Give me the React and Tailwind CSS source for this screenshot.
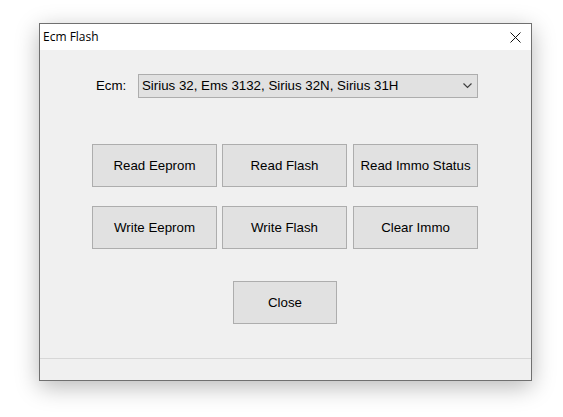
export default function App() {
    const btn =
        'flex h-[43px] w-[125px] items-center justify-center border border-[#adadad] bg-[#e1e1e1] text-[13.3px] text-black';

    return (
        <div className="h-[417px] w-[563px] bg-white pl-[39px] pt-[23px]" style={{ fontFamily: '"Liberation Sans", Arial, sans-serif' }}>
            <div className="flex h-[358px] w-[493px] flex-col border border-[#707070] bg-[#f0f0f0] shadow-[0_6px_22px_rgba(0,0,0,0.28)]">
                {/* title bar */}
                <div className="flex h-[26px] items-center justify-between bg-white pl-[3px] pr-[10px]">
                    <span className="text-[12px] text-black" style={{ fontFamily: '"Open Sans", sans-serif' }}>
                        Ecm Flash
                    </span>
                    <svg width="11" height="11" viewBox="0 0 11 11" className="mt-[1px]">
                        <path d="M0.5 0.5 L10.5 10.5 M10.5 0.5 L0.5 10.5" stroke="#111" strokeWidth="1" />
                    </svg>
                </div>

                {/* body */}
                <div className="flex h-[308px] flex-col">
                    <div className="mt-[24px] flex items-center pl-[56px]">
                        <span className="w-[42px] text-[13.3px] text-black">Ecm:</span>
                        <div className="flex h-[24px] w-[340px] items-center justify-between border border-[#adadad] bg-[#e1e1e1] pl-[3px] pr-[5px] text-[13.3px] text-black">
                            <span>Sirius 32, Ems 3132, Sirius 32N, Sirius 31H</span>
                            <svg width="9" height="6" viewBox="0 0 9 6">
                                <path d="M0.5 0.5 L4.5 4.5 L8.5 0.5" fill="none" stroke="#404040" strokeWidth="1.2" />
                            </svg>
                        </div>
                    </div>

                    <div className="mt-[46px] flex flex-col gap-[19px] pl-[52px]">
                        <div className="flex gap-[5px]">
                            <div className={btn}>Read Eeprom</div>
                            <div className={btn}>Read Flash</div>
                            <div className={`${btn} ml-[1px]`}>Read Immo Status</div>
                        </div>
                        <div className="flex gap-[5px]">
                            <div className={btn}>Write Eeprom</div>
                            <div className={btn}>Write Flash</div>
                            <div className={`${btn} ml-[1px]`}>Clear Immo</div>
                        </div>
                    </div>

                    <div className="mt-[32px] flex pl-[193px]">
                        <div className="flex h-[43px] w-[104px] items-center justify-center border border-[#adadad] bg-[#e1e1e1] text-[13.3px] text-black">
                            Close
                        </div>
                    </div>
                </div>

                <div className="h-px bg-[#d7d7d7]" />
                <div className="flex-1" />
            </div>
        </div>
    );
}
